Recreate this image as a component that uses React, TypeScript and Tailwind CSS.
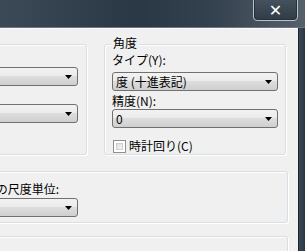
import type { ReactNode } from "react";

const Arrow = () => (
  <svg width="7" height="4" viewBox="0 0 7 4" className="shrink-0">
    <polygon points="0,0 7,0 3.5,4" fill="#000" />
  </svg>
);

interface ComboProps {
  text?: string;
  className?: string;
}

const Combo = ({ text, className = "" }: ComboProps) => (
  <div
    className={`flex h-[19px] items-center justify-between rounded-[3px] border border-[#707070] bg-[linear-gradient(#f2f2f2_0%,#ebebeb_45%,#dddddd_50%,#cfcfcf_100%)] pl-[3px] pr-[5px] leading-[14px] ${className}`}
  >
    <span className="whitespace-nowrap">{text}</span>
    <Arrow />
  </div>
);

interface GroupProps {
  label?: string;
  className?: string;
  children?: ReactNode;
}

const Group = ({ label, className = "", children }: GroupProps) => (
  <div
    className={`rounded-[3px] border border-[#d5dfe5] shadow-[inset_1px_1px_0_#ffffff,1px_1px_0_#ffffff] ${className}`}
  >
    {label ? (
      <div className="-mt-[9px] ml-[6px] w-fit bg-[#f0f0f0] px-[2px] leading-[14px]">
        {label}
      </div>
    ) : null}
    {children}
  </div>
);

const Checkbox = () => (
  <div className="h-[13px] w-[13px] border border-[#8f8f8f] bg-white p-[2px]">
    <div className="h-full w-full border border-[#cfcfcf] bg-[linear-gradient(135deg,#dcdcdc,#f8f8f8)]" />
  </div>
);

export default function App() {
  return (
    <div className="flex h-[251px] w-[305px] flex-col overflow-hidden bg-[#2c3a47] font-['Noto_Sans_CJK_JP',sans-serif] text-[12px] text-black">
      {/* title bar */}
      <div className="flex h-[28px] shrink-0 justify-end border-b border-[#6b7682] bg-[linear-gradient(90deg,#3c4a58_0%,#2a3744_45%,#34414e_70%,#56616c_100%)] pr-[7px]">
        <div className="-mt-[2px] flex h-[23px] w-[45px] items-center justify-center rounded-b-[4px] border border-[#b9c1c9] bg-[linear-gradient(#46525e,#2f3b47)] shadow-[inset_0_0_0_1px_#26313c]">
          <span className="mt-[2px] font-['DejaVu_Sans',sans-serif] text-[16px] font-bold leading-none text-white">
            ✕
          </span>
        </div>
      </div>

      <div className="flex min-h-0 flex-1">
        <div className="w-[298px] shrink-0 border-t border-[#fbfbfb] bg-[#f0f0f0]">
          {/* units + angle */}
          <div className="mt-[15px] flex items-start">
            <Group className="-ml-[10px] h-[111px] w-[97px]">
              <Combo className="-ml-[4px] mt-[22px] w-[91px]" />
              <Combo className="-ml-[4px] mt-[18px] w-[91px]" />
            </Group>

            <Group label="角度" className="ml-[17px] h-[111px] w-[182px]">
              <div className="ml-[7px] mt-[3px] leading-[14px]">タイプ(Y):</div>
              <Combo text="度 (十進表記)" className="ml-[7px] mt-[5px] w-[166px]" />
              <div className="ml-[7px] mt-[3px] leading-[14px]">精度(N):</div>
              <Combo text="0" className="ml-[7px] mt-[1px] w-[166px]" />
              <div className="ml-[8px] mt-[11px] flex items-center gap-[3px] leading-[14px]">
                <Checkbox />
                <span>時計回り(C)</span>
              </div>
            </Group>
          </div>

          {/* insertion scale */}
          <Group className="-ml-[10px] mt-[16px] h-[52px] w-[298px]">
            <div className="mt-[10px] flex w-[76px] justify-end whitespace-nowrap pr-[8px] leading-[14px]">
              挿入されたコンテンツの尺度単位:
            </div>
            <Combo className="-ml-[4px] mt-[2px] w-[91px]" />
          </Group>

          {/* sample output */}
          <Group className="-ml-[10px] mt-[13px] h-[40px] w-[298px]" />
        </div>
        <div className="flex-1 border-l border-[#1c252e] bg-[linear-gradient(90deg,#3a4856,#2a3643)]" />
      </div>
    </div>
  );
}
